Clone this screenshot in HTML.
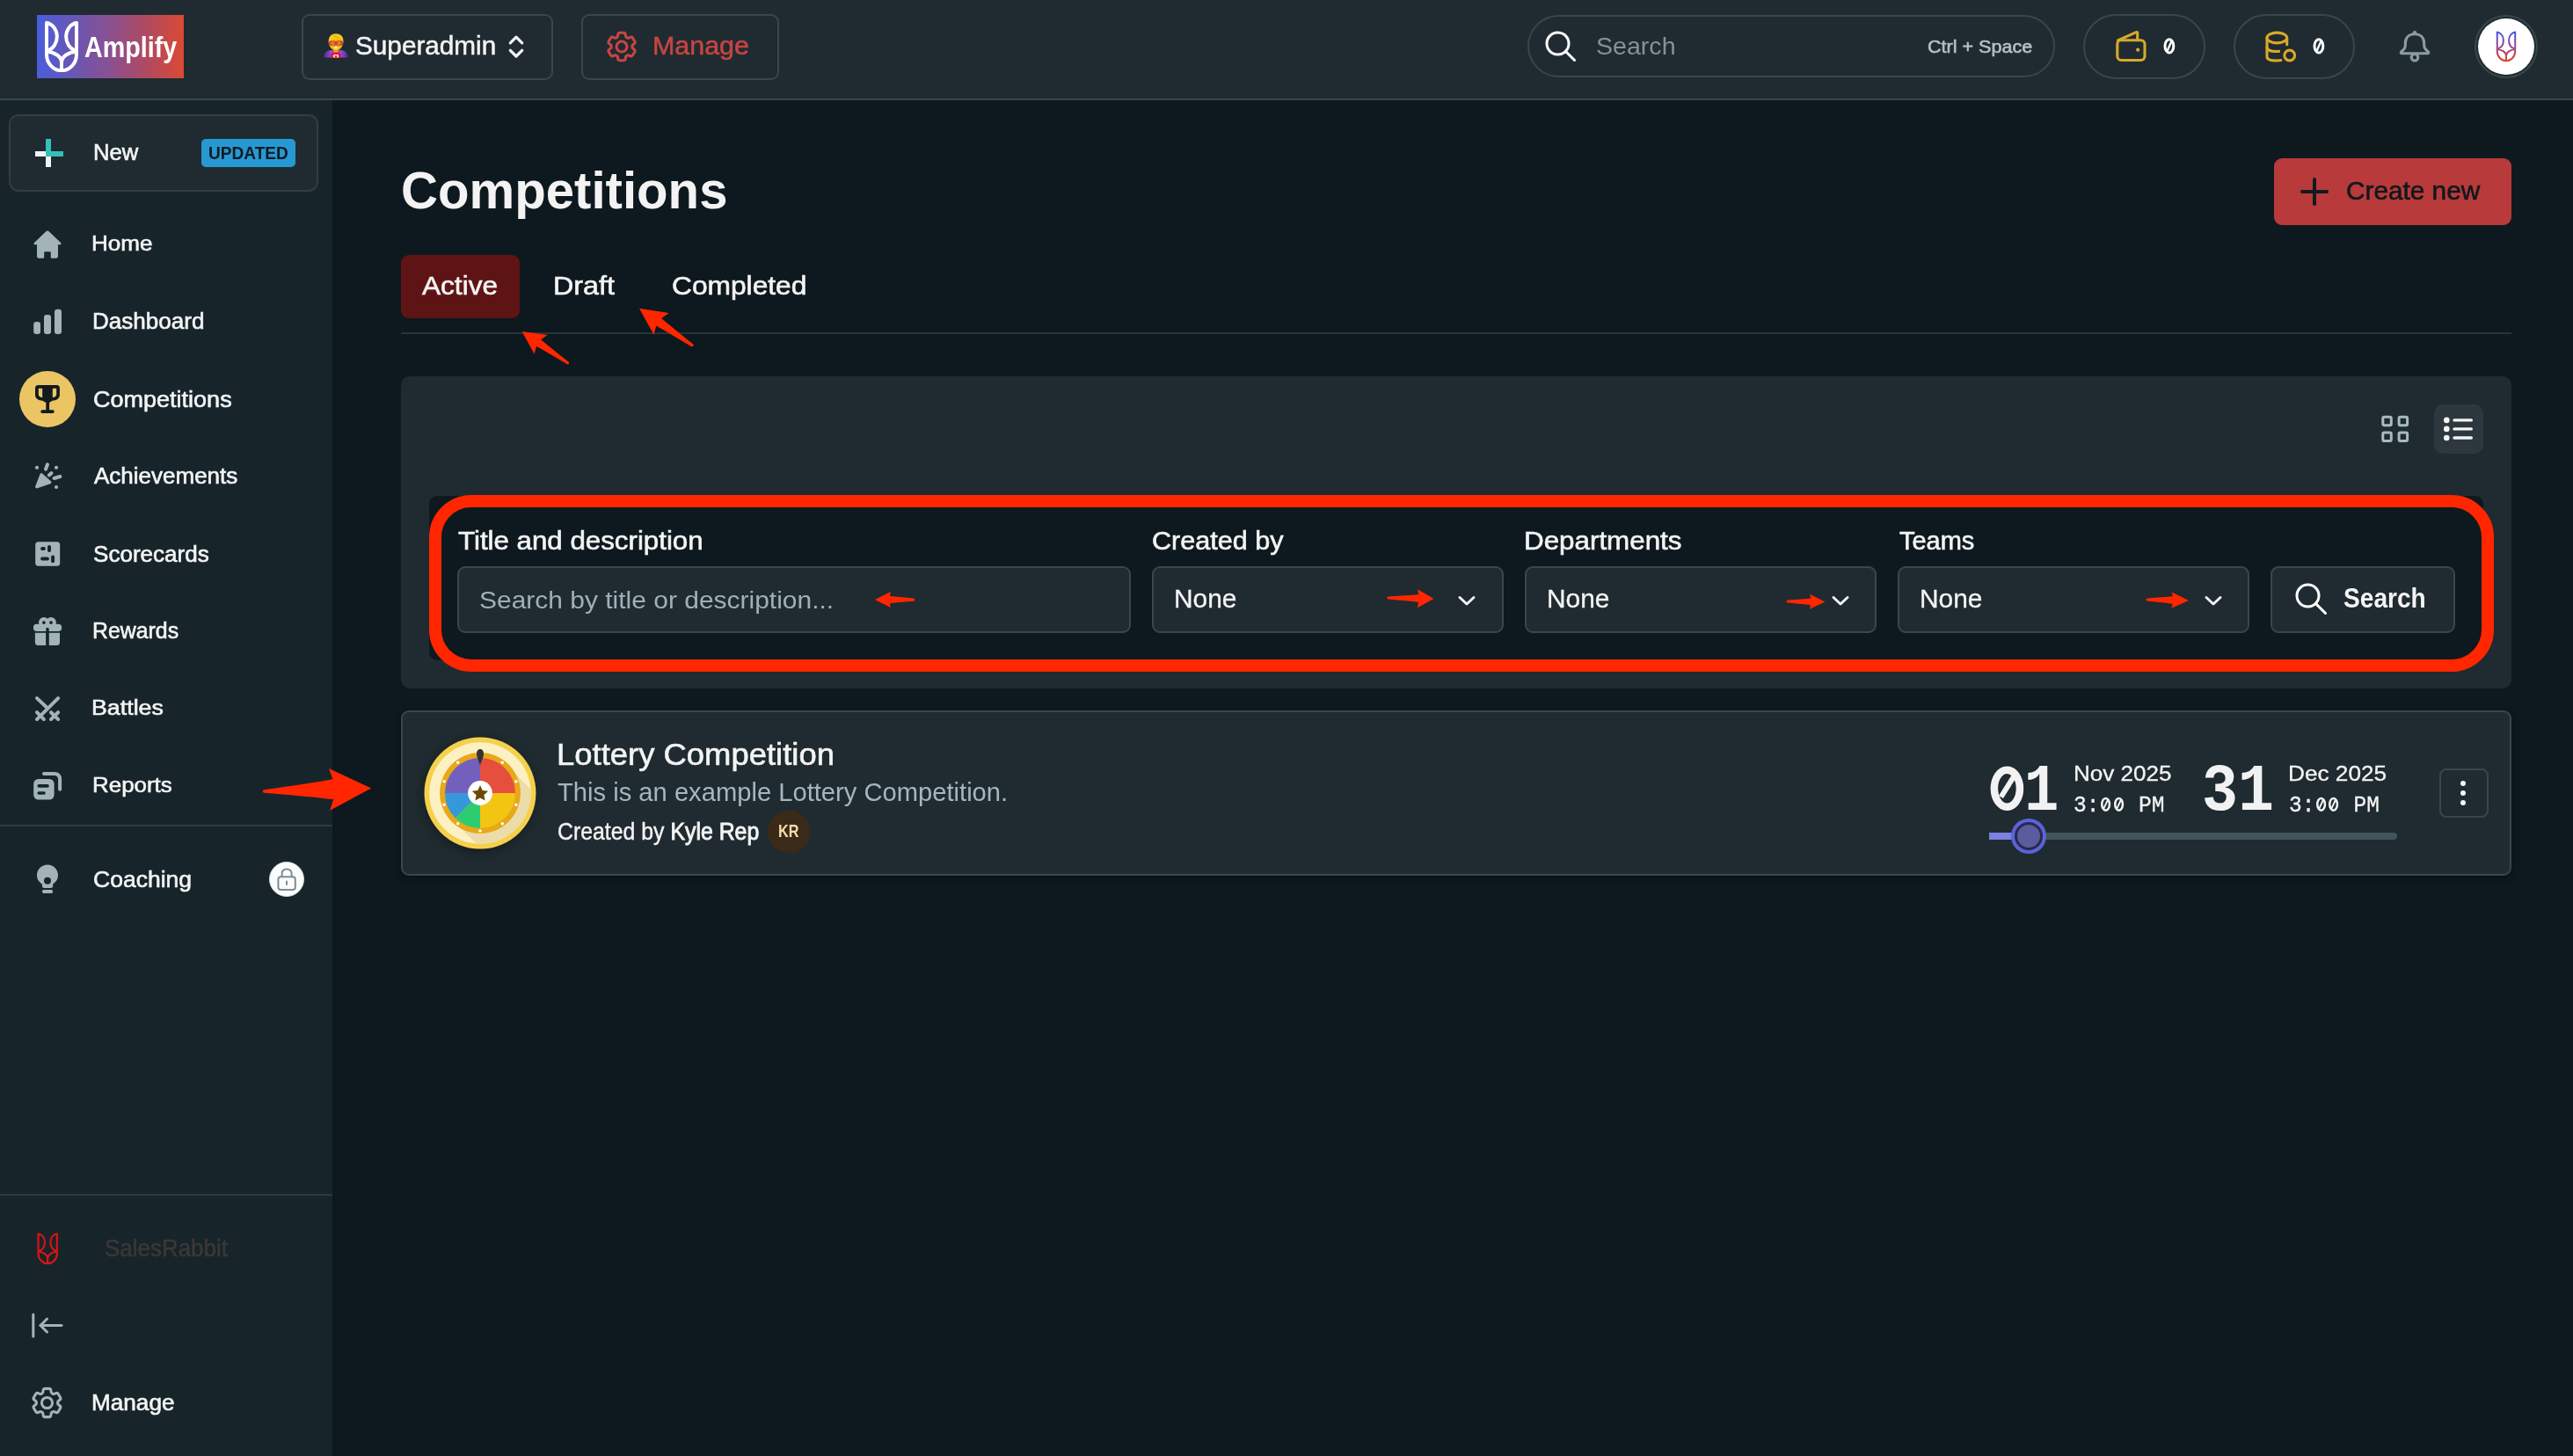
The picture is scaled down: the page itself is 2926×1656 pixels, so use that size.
<!DOCTYPE html>
<html><head><meta charset="utf-8"><style>
html,body{margin:0;padding:0;width:2926px;height:1656px;overflow:hidden;background:#0d191e;}
body>div,body>span,body>svg{position:absolute;box-sizing:border-box;}
.t{line-height:1;white-space:nowrap;transform-origin:0 0;}
</style></head><body>
<div style="left:0px;top:0px;width:2926px;height:112px;background:#1f2b30"></div>
<div style="left:0px;top:112px;width:2926px;height:2px;background:#3a4549"></div>
<div style="left:0px;top:114px;width:378px;height:1542px;background:#17252b"></div>
<div style="left:42px;top:17px;width:167px;height:72px;background:linear-gradient(90deg,#4a5edc 0%,#6a56b4 25%,#8a5090 50%,#b04a60 75%,#da4a33 100%)"></div>
<span class="t" style="left:96.32px;top:38.05px;font-family:'Liberation Sans',sans-serif;font-size:32.61px;font-weight:700;color:#fff;transform:scaleX(0.8797)">Amplify</span>
<div style="left:343px;top:16px;width:286px;height:75px;border:2px solid #3a464b;border-radius:9px;background:#1f2b30"></div>
<span class="t" style="left:403.52px;top:36.81px;font-family:'Liberation Sans',sans-serif;font-size:30.29px;font-weight:400;color:#f4f4f4;-webkit-text-stroke:0.5px #f4f4f4;transform:scaleX(0.9814)">Superadmin</span>
<div style="left:661px;top:16px;width:225px;height:75px;border:2px solid #3a464b;border-radius:9px;background:#1f2b30"></div>
<span class="t" style="left:742.45px;top:37.39px;font-family:'Liberation Sans',sans-serif;font-size:29.71px;font-weight:400;color:#c94444;-webkit-text-stroke:0.5px #c94444;transform:scaleX(1.0240)">Manage</span>
<div style="left:1737px;top:17px;width:600px;height:71px;border:2px solid #3a464b;border-radius:36px;background:#1f2b30"></div>
<span class="t" style="left:1814.99px;top:38.12px;font-family:'Liberation Sans',sans-serif;font-size:28.26px;font-weight:400;color:#8b8f91;transform:scaleX(1.0115)">Search</span>
<span class="t" style="left:2191.97px;top:41.74px;font-family:'Liberation Sans',sans-serif;font-size:21.01px;font-weight:400;color:#b4c2c6;-webkit-text-stroke:0.6px #b4c2c6;transform:scaleX(1.0261)">Ctrl + Space</span>
<div style="left:2369px;top:16px;width:139px;height:74px;border:2px solid #3a464b;border-radius:37px"></div>
<div style="left:2540px;top:16px;width:138px;height:74px;border:2px solid #3a464b;border-radius:37px"></div>
<div style="left:2814px;top:17px;width:72px;height:72px;border:2px solid #39464b;border-radius:50%"></div>
<div style="left:2818px;top:21px;width:64px;height:64px;background:#fff;border-radius:50%"></div>
<div style="left:10px;top:130px;width:352px;height:88px;border:2px solid #323d42;border-radius:11px;background:#1f2b30"></div>
<span class="t" style="left:105.98px;top:161.07px;font-family:'Liberation Sans',sans-serif;font-size:25.36px;font-weight:400;color:#f4f4f4;-webkit-text-stroke:0.6px #f4f4f4;transform:scaleX(1.0102)">New</span>
<div style="left:229px;top:158px;width:107px;height:32px;background:#2799d2;border-radius:5px"></div>
<span class="t" style="left:237.08px;top:163.80px;font-family:'Liberation Sans',sans-serif;font-size:20.65px;font-weight:700;color:#0e1a22;transform:scaleX(0.9245)">UPDATED</span>
<span class="t" style="left:104.48px;top:265.18px;font-family:'Liberation Sans',sans-serif;font-size:24.64px;font-weight:400;color:#f4f4f4;-webkit-text-stroke:0.6px #f4f4f4;transform:scaleX(1.0579)">Home</span>
<span class="t" style="left:104.54px;top:353.07px;font-family:'Liberation Sans',sans-serif;font-size:25.36px;font-weight:400;color:#f4f4f4;-webkit-text-stroke:0.6px #f4f4f4;transform:scaleX(1.0281)">Dashboard</span>
<span class="t" style="left:105.56px;top:440.76px;font-family:'Liberation Sans',sans-serif;font-size:26.09px;font-weight:400;color:#f4f4f4;-webkit-text-stroke:0.6px #f4f4f4;transform:scaleX(1.0358)">Competitions</span>
<span class="t" style="left:106.60px;top:529.07px;font-family:'Liberation Sans',sans-serif;font-size:25.36px;font-weight:400;color:#f4f4f4;-webkit-text-stroke:0.6px #f4f4f4;transform:scaleX(1.0252)">Achievements</span>
<span class="t" style="left:105.60px;top:616.56px;font-family:'Liberation Sans',sans-serif;font-size:26.09px;font-weight:400;color:#f4f4f4;-webkit-text-stroke:0.6px #f4f4f4;transform:scaleX(0.9992)">Scorecards</span>
<span class="t" style="left:104.67px;top:704.70px;font-family:'Liberation Sans',sans-serif;font-size:25.80px;font-weight:400;color:#f4f4f4;-webkit-text-stroke:0.6px #f4f4f4;transform:scaleX(0.9636)">Rewards</span>
<span class="t" style="left:104.42px;top:793.18px;font-family:'Liberation Sans',sans-serif;font-size:24.64px;font-weight:400;color:#f4f4f4;-webkit-text-stroke:0.6px #f4f4f4;transform:scaleX(1.0877)">Battles</span>
<span class="t" style="left:104.50px;top:881.18px;font-family:'Liberation Sans',sans-serif;font-size:24.64px;font-weight:400;color:#f4f4f4;-webkit-text-stroke:0.6px #f4f4f4;transform:scaleX(1.0524)">Reports</span>
<span class="t" style="left:105.58px;top:986.96px;font-family:'Liberation Sans',sans-serif;font-size:26.09px;font-weight:400;color:#f4f4f4;-webkit-text-stroke:0.6px #f4f4f4;transform:scaleX(1.0176)">Coaching</span>
<div style="left:22px;top:422px;width:64px;height:64px;background:#ebc564;border-radius:50%"></div>
<div style="left:0px;top:938px;width:378px;height:2px;background:#2f3a3f"></div>
<div style="left:306px;top:980px;width:40px;height:40px;background:#fbfcfc;border-radius:50%;border:1.5px solid #cfd8db"></div>
<div style="left:0px;top:1358px;width:378px;height:2px;background:#2f3a3f"></div>
<span class="t" style="left:118.84px;top:1406.82px;font-family:'Liberation Sans',sans-serif;font-size:26.96px;font-weight:400;color:#3c3836;-webkit-text-stroke:0.4px #3c3836;transform:scaleX(0.9625)">SalesRabbit</span>
<span class="t" style="left:104.33px;top:1583.09px;font-family:'Liberation Sans',sans-serif;font-size:25.22px;font-weight:400;color:#f4f4f4;-webkit-text-stroke:0.6px #f4f4f4;transform:scaleX(1.0364)">Manage</span>
<span class="t" style="left:455.57px;top:186.68px;font-family:'Liberation Sans',sans-serif;font-size:60.14px;font-weight:700;color:#f3f3f3;transform:scaleX(0.9671)">Competitions</span>
<div style="left:2586px;top:180px;width:270px;height:76px;background:#b93a3a;border-radius:9px"></div>
<span class="t" style="left:2667.97px;top:203.01px;font-family:'Liberation Sans',sans-serif;font-size:28.99px;font-weight:400;color:#10191e;-webkit-text-stroke:0.6px #10191e;transform:scaleX(1.0270)">Create new</span>
<div style="left:456px;top:290px;width:135px;height:72px;background:#5e1415;border-radius:9px"></div>
<span class="t" style="left:480.40px;top:310.35px;font-family:'Liberation Sans',sans-serif;font-size:30.00px;font-weight:400;color:#f4f4f4;-webkit-text-stroke:0.6px #f4f4f4;transform:scaleX(1.0531)">Active</span>
<span class="t" style="left:629.45px;top:310.35px;font-family:'Liberation Sans',sans-serif;font-size:30.00px;font-weight:400;color:#f4f4f4;-webkit-text-stroke:0.6px #f4f4f4;transform:scaleX(1.0746)">Draft</span>
<span class="t" style="left:764.34px;top:310.35px;font-family:'Liberation Sans',sans-serif;font-size:30.00px;font-weight:400;color:#f4f4f4;-webkit-text-stroke:0.6px #f4f4f4;transform:scaleX(1.0573)">Completed</span>
<div style="left:456px;top:378px;width:2400px;height:2px;background:#29343a"></div>
<div style="left:456px;top:428px;width:2400px;height:355px;background:#1f2b30;border-radius:10px"></div>
<div style="left:2768px;top:460px;width:56px;height:56px;background:#2c383d;border-radius:10px"></div>
<div style="left:488px;top:564px;width:2336px;height:187px;background:#0d191e;border-radius:9px"></div>
<span class="t" style="left:520.50px;top:600.44px;font-family:'Liberation Sans',sans-serif;font-size:29.42px;font-weight:400;color:#f4f4f4;-webkit-text-stroke:0.6px #f4f4f4;transform:scaleX(1.0632)">Title and description</span>
<span class="t" style="left:1309.96px;top:600.44px;font-family:'Liberation Sans',sans-serif;font-size:29.42px;font-weight:400;color:#f4f4f4;-webkit-text-stroke:0.6px #f4f4f4;transform:scaleX(1.0402)">Created by</span>
<span class="t" style="left:1732.87px;top:600.44px;font-family:'Liberation Sans',sans-serif;font-size:29.42px;font-weight:400;color:#f4f4f4;-webkit-text-stroke:0.6px #f4f4f4;transform:scaleX(1.0663)">Departments</span>
<span class="t" style="left:2159.50px;top:600.44px;font-family:'Liberation Sans',sans-serif;font-size:29.42px;font-weight:400;color:#f4f4f4;-webkit-text-stroke:0.6px #f4f4f4;transform:scaleX(0.9855)">Teams</span>
<div style="left:520px;top:644px;width:766px;height:76px;border:2px solid #3a464b;border-radius:9px;background:#1f2b30"></div>
<div style="left:1310px;top:644px;width:400px;height:76px;border:2px solid #3a464b;border-radius:9px;background:#1f2b30"></div>
<div style="left:1734px;top:644px;width:400px;height:76px;border:2px solid #3a464b;border-radius:9px;background:#1f2b30"></div>
<div style="left:2158px;top:644px;width:400px;height:76px;border:2px solid #3a464b;border-radius:9px;background:#1f2b30"></div>
<div style="left:2582px;top:644px;width:210px;height:76px;border:2px solid #3a464b;border-radius:9px;background:#1f2b30"></div>
<span class="t" style="left:544.94px;top:668.12px;font-family:'Liberation Sans',sans-serif;font-size:28.26px;font-weight:400;color:#9fb1b6;transform:scaleX(1.0610)">Search by title or description...</span>
<span class="t" style="left:1334.94px;top:666.51px;font-family:'Liberation Sans',sans-serif;font-size:28.99px;font-weight:400;color:#f4f4f4;-webkit-text-stroke:0.3px #f4f4f4;transform:scaleX(1.0303)">None</span>
<span class="t" style="left:1758.94px;top:666.51px;font-family:'Liberation Sans',sans-serif;font-size:28.99px;font-weight:400;color:#f4f4f4;-webkit-text-stroke:0.3px #f4f4f4;transform:scaleX(1.0303)">None</span>
<span class="t" style="left:2182.94px;top:666.51px;font-family:'Liberation Sans',sans-serif;font-size:28.99px;font-weight:400;color:#f4f4f4;-webkit-text-stroke:0.3px #f4f4f4;transform:scaleX(1.0303)">None</span>
<span class="t" style="left:2664.58px;top:665.28px;font-family:'Liberation Sans',sans-serif;font-size:30.43px;font-weight:700;color:#f4f4f4;transform:scaleX(0.9242)">Search</span>
<div style="left:456px;top:808px;width:2400px;height:188px;border:2px solid #3a464b;border-radius:9px;background:#1f2b30;box-shadow:0 3px 8px rgba(0,0,0,0.35)"></div>
<span class="t" style="left:632.87px;top:840.70px;font-family:'Liberation Sans',sans-serif;font-size:34.20px;font-weight:400;color:#f4f4f4;-webkit-text-stroke:0.6px #f4f4f4;transform:scaleX(1.0659)">Lottery Competition</span>
<span class="t" style="left:634.01px;top:886.02px;font-family:'Liberation Sans',sans-serif;font-size:29.57px;font-weight:400;color:#a3b8be;transform:scaleX(0.9864)">This is an example Lottery Competition.</span>
<span class="t" style="left:634.10px;top:931.73px;font-family:'Liberation Sans',sans-serif;font-size:27.54px;font-weight:400;color:#f4f4f4;-webkit-text-stroke:0.4px #f4f4f4;transform:scaleX(0.9022)">Created by <span style="-webkit-text-stroke:0.9px #f4f4f4">Kyle Rep</span></span>
<div style="left:873px;top:922px;width:48px;height:48px;background:#3b2a17;border-radius:50%"></div>
<span class="t" style="left:884.69px;top:935.66px;font-family:'Liberation Sans',sans-serif;font-size:19.93px;font-weight:700;color:#f5dcae;transform:scaleX(0.8148)">KR</span>
<span class="t" style="left:2302.42px;top:863.47px;font-family:'Liberation Mono',monospace;font-size:76.52px;font-weight:700;color:#f2f2f2;transform:scaleX(0.8553)">1</span>
<svg style="left:2259px;top:867px;" width="48" height="60" viewBox="0 0 48 60"><ellipse cx="23.4" cy="29.75" rx="14.55" ry="21" fill="none" stroke="#f2f2f2" stroke-width="8.5"/><path d="M16.5,39.5 L31.5,15.5" stroke="#f2f2f2" stroke-width="6"/></svg>
<span class="t" style="left:2357.88px;top:868.18px;font-family:'Liberation Sans',sans-serif;font-size:24.64px;font-weight:400;color:#f4f4f4;-webkit-text-stroke:0.3px #f4f4f4;transform:scaleX(1.0583)">Nov 2025</span>
<span class="t" style="left:2358.13px;top:903.23px;font-family:'Liberation Mono',monospace;font-size:26.36px;font-weight:400;color:#f4f4f4;-webkit-text-stroke:0.3px #f4f4f4;transform:scaleX(0.9346)">3:&nbsp;&nbsp; PM</span>
<span class="t" style="left:2504.37px;top:864.11px;font-family:'Liberation Mono',monospace;font-size:75.15px;font-weight:700;color:#f2f2f2;transform:scaleX(0.9084)">31</span>
<span class="t" style="left:2602.37px;top:868.18px;font-family:'Liberation Sans',sans-serif;font-size:24.64px;font-weight:400;color:#f4f4f4;-webkit-text-stroke:0.3px #f4f4f4;transform:scaleX(1.0631)">Dec 2025</span>
<span class="t" style="left:2602.64px;top:903.23px;font-family:'Liberation Mono',monospace;font-size:26.36px;font-weight:400;color:#f4f4f4;-webkit-text-stroke:0.3px #f4f4f4;transform:scaleX(0.9299)">3:&nbsp;&nbsp; PM</span>
<div style="left:2774px;top:874px;width:56px;height:56px;border:2px solid #3a464b;border-radius:8px"></div>
<div style="left:2262px;top:947px;width:464px;height:8px;background:#43545a;border-radius:4px"></div>
<div style="left:2262px;top:947px;width:38px;height:8px;background:#7c80e2"></div>
<div style="left:2287px;top:931px;width:40px;height:40px;background:#5c63d8;border-radius:50%"></div>
<div style="left:2291px;top:935px;width:32px;height:32px;background:#262a4c;border-radius:50%"></div>
<div style="left:2294px;top:938px;width:26px;height:26px;background:#5a5c9e;border-radius:50%"></div>
<svg style="left:2388.2px;top:905px;" width="13.2" height="19.6" viewBox="0 0 13.2 19.6"><ellipse cx="6.6" cy="9.8" rx="4.35" ry="6.9" fill="none" stroke="#f4f4f4" stroke-width="2.5"/><path d="M4.4,14.6 L8.8,5" stroke="#f4f4f4" stroke-width="1.9"/></svg>
<svg style="left:2402.8px;top:905px;" width="13.2" height="19.6" viewBox="0 0 13.2 19.6"><ellipse cx="6.6" cy="9.8" rx="4.35" ry="6.9" fill="none" stroke="#f4f4f4" stroke-width="2.5"/><path d="M4.4,14.6 L8.8,5" stroke="#f4f4f4" stroke-width="1.9"/></svg>
<svg style="left:2632.7px;top:905px;" width="13.2" height="19.6" viewBox="0 0 13.2 19.6"><ellipse cx="6.6" cy="9.8" rx="4.35" ry="6.9" fill="none" stroke="#f4f4f4" stroke-width="2.5"/><path d="M4.4,14.6 L8.8,5" stroke="#f4f4f4" stroke-width="1.9"/></svg>
<svg style="left:2647.3px;top:905px;" width="13.2" height="19.6" viewBox="0 0 13.2 19.6"><ellipse cx="6.6" cy="9.8" rx="4.35" ry="6.9" fill="none" stroke="#f4f4f4" stroke-width="2.5"/><path d="M4.4,14.6 L8.8,5" stroke="#f4f4f4" stroke-width="1.9"/></svg>
<svg style="left:50.6px;top:24px;" width="38" height="58.3" viewBox="0 0 38 58.3"><path d="M2,2 V38 A17,18.3 0 0 0 36,38 V2 M2,2 C17,5 18.5,29 2,34 M36,2 C21,5 19.5,29 36,34 M2,34.5 C11,35.5 19,40 19,47 V56 M36,34.5 C27,35.5 19,40 19,47" fill="none" stroke="#fff" stroke-width="4" stroke-linecap="round" stroke-linejoin="round"/></svg>
<svg style="left:367px;top:37px;" width="30" height="29" viewBox="0 0 30 29"><defs><linearGradient id="capeg" x1="0" y1="0" x2="1" y2="0"><stop offset="0" stop-color="#4a2a8a"/><stop offset="0.3" stop-color="#8a50d0"/><stop offset="0.7" stop-color="#8a50d0"/><stop offset="1" stop-color="#4a2a8a"/></linearGradient></defs>
<path d="M1,28.5 C2,22 5,20 10,20 L20,20 C25,20 28,22 29,28.5 Z" fill="url(#capeg)"/>
<path d="M8.5,28.5 C9,24 11,22.5 13,22.5 L17,22.5 C19,22.5 21,24 21.5,28.5 Z" fill="#e3173c"/>
<rect x="12" y="25.3" width="6" height="3.2" rx="1" fill="#fff"/><rect x="13.5" y="26.3" width="3" height="2.2" fill="#e3173c"/>
<rect x="12.5" y="17" width="5" height="5.5" fill="#e9a000"/>
<ellipse cx="15" cy="12.2" rx="7.8" ry="8.3" fill="#f5be12"/>
<path d="M6.8,13 C5.8,4.5 9.8,1.2 15,1.2 C20.5,1.2 24.5,4.5 23.3,13 C22.6,8.8 21,6.8 17.5,5.8 C15,7.5 10.5,8 6.8,13Z" fill="#f7c81e"/>
<path d="M12,3.5 C14,4.8 16.5,5.2 18.5,6" fill="none" stroke="#d9a000" stroke-width="0.8"/>
<path d="M7,12 C7,9.6 8.5,9.3 11.3,9.3 C13,9.3 14,10 15,10 C16,10 17,9.3 18.7,9.3 C21.5,9.3 23,9.6 23,12 C23,14.6 21,15 18.7,15 C17,15 16,14.2 15,14.2 C14,14.2 13,15 11.3,15 C9,15 7,14.6 7,12Z" fill="#e8353a"/>
<circle cx="11.4" cy="12.1" r="1.9" fill="#f5be12"/><circle cx="18.6" cy="12.1" r="1.9" fill="#f5be12"/>
<circle cx="11.4" cy="12.1" r="1.1" fill="#5a8a20"/><circle cx="18.6" cy="12.1" r="1.1" fill="#5a8a20"/>
<ellipse cx="15" cy="17.3" rx="1.9" ry="0.9" fill="#fff"/>
</svg>
<svg style="left:575px;top:38px;" width="24" height="30" viewBox="0 0 24 30"><path d="M5.3,10.9 L12,4.2 L18.7,10.9 M5.3,19.3 L12,26 L18.7,19.3" fill="none" stroke="#f4f4f4" stroke-width="3.2" stroke-linecap="round" stroke-linejoin="round"/></svg>
<svg style="left:686.4px;top:32.1px;" width="42" height="42" viewBox="0 0 24 24"><path d="M9.594 3.94c.09-.542.56-.94 1.11-.94h2.593c.55 0 1.02.398 1.11.94l.213 1.281c.063.374.313.686.645.87.074.04.147.083.22.127.325.196.72.257 1.075.124l1.217-.456a1.125 1.125 0 0 1 1.37.49l1.296 2.247a1.125 1.125 0 0 1-.26 1.431l-1.003.827c-.293.241-.438.613-.43.992a7.723 7.723 0 0 1 0 .255c-.008.378.137.75.43.991l1.004.827c.424.35.534.955.26 1.43l-1.298 2.247a1.125 1.125 0 0 1-1.369.491l-1.217-.456c-.355-.133-.75-.072-1.076.124a6.47 6.47 0 0 1-.22.128c-.331.183-.581.495-.644.869l-.213 1.281c-.09.543-.56.94-1.11.94h-2.594c-.55 0-1.019-.398-1.11-.94l-.213-1.281c-.062-.374-.312-.686-.644-.87a6.52 6.52 0 0 1-.22-.127c-.325-.196-.72-.257-1.076-.124l-1.217.456a1.125 1.125 0 0 1-1.369-.49l-1.297-2.247a1.125 1.125 0 0 1 .26-1.431l1.004-.827c.292-.24.437-.613.43-.991a6.932 6.932 0 0 1 0-.255c.007-.38-.138-.751-.43-.992l-1.004-.827a1.125 1.125 0 0 1-.26-1.43l1.297-2.247a1.125 1.125 0 0 1 1.37-.491l1.216.456c.356.133.751.072 1.076-.124.072-.044.146-.086.22-.128.332-.183.582-.495.644-.869l.214-1.28ZM15.4 12a3.4 3.4 0 1 1-6.8 0 3.4 3.4 0 0 1 6.8 0Z" fill="none" stroke="#c94444" stroke-width="1.75"/></svg>
<svg style="left:1756px;top:34px;" width="38" height="38" viewBox="0 0 38 38"><circle cx="15.5" cy="15.5" r="12.5" fill="none" stroke="#fff" stroke-width="3"/><path d="M24.5,24.5 L34.5,34.5" stroke="#fff" stroke-width="3" stroke-linecap="round"/></svg>
<svg style="left:2403px;top:33px;" width="41" height="41" viewBox="0 0 41 41"><rect x="4.8" y="12.8" width="31.2" height="22.7" rx="4.5" fill="none" stroke="#d9a82a" stroke-width="3.1"/><path d="M5.5,13 L26.3,3.6 Q27.7,3 27.7,4.6 L27.7,12.8" fill="none" stroke="#d9a82a" stroke-width="3.1" stroke-linejoin="round" stroke-linecap="round"/><circle cx="28.2" cy="23.7" r="2.1" fill="#d9a82a"/></svg>
<svg style="left:2574px;top:33px;" width="42" height="42" viewBox="0 0 42 42"><g fill="none" stroke="#d9a82a" stroke-width="3.1" stroke-linecap="round">
<ellipse cx="15.35" cy="10" rx="11.35" ry="5.9"/>
<path d="M4,10 V31.5 C4,34.5 9,36 15.3,36 C16.8,36 18.3,35.9 19.8,35.6"/>
<path d="M4,20.5 C4,23.8 9,25.5 15.3,25.5 C16,25.5 16.8,25.5 17.6,25.4"/>
<path d="M26.7,10 V17.8"/>
<circle cx="29.7" cy="30" r="5.9"/>
</g></svg>
<svg style="left:2459.8px;top:43px;" width="14" height="19" viewBox="0 0 14 19"><ellipse cx="6.9" cy="9.4" rx="4.9" ry="7.6" fill="none" stroke="#fff" stroke-width="3"/><path d="M9.3,4.3 L4.7,14.7" stroke="#fff" stroke-width="2.4"/></svg>
<svg style="left:2630px;top:43px;" width="14" height="19" viewBox="0 0 14 19"><ellipse cx="6.9" cy="9.4" rx="4.9" ry="7.6" fill="none" stroke="#fff" stroke-width="3"/><path d="M9.3,4.3 L4.7,14.7" stroke="#fff" stroke-width="2.4"/></svg>
<svg style="left:2727px;top:33px;" width="38" height="40" viewBox="0 0 38 40"><g fill="none" stroke="#8b9ca1" stroke-width="3.1" stroke-linejoin="round">
<path d="M19,5.8 C12,5.8 8.3,10.5 8.3,16.5 V19 C8.3,21.5 6.8,23.3 3.8,25.7 C2.8,26.6 3.2,27.8 4.7,27.8 H33.3 C34.8,27.8 35.2,26.6 34.2,25.7 C31.2,23.3 29.7,21.5 29.7,19 V16.5 C29.7,10.5 26,5.8 19,5.8 Z"/>
<circle cx="19" cy="32.2" r="3.8"/>
</g><circle cx="19" cy="4.3" r="2.3" fill="#8b9ca1"/></svg>
<svg style="left:2838px;top:35px;" width="24" height="35.5" viewBox="0 0 23.4 35.4"><defs><linearGradient id="lg1" x1="0" y1="0" x2="0" y2="1"><stop offset="0" stop-color="#4a55e6"/><stop offset="1" stop-color="#e4432e"/></linearGradient></defs><path d="M2,2 V38 A17,18.3 0 0 0 36,38 V2 M2,2 C17,5 18.5,29 2,34 M36,2 C21,5 19.5,29 36,34 M2,34.5 C11,35.5 19,40 19,47 V56 M36,34.5 C27,35.5 19,40 19,47" fill="none" stroke="url(#lg1)" stroke-width="3.4" stroke-linecap="round" stroke-linejoin="round" transform="translate(0.3,0.3) scale(0.6)"/></svg>
<div style="left:52px;top:158px;width:6px;height:20px;background:#33c1b9"></div>
<div style="left:52px;top:172px;width:20px;height:6px;background:#33c1b9"></div>
<div style="left:40px;top:172px;width:12px;height:6px;background:#f2f4f4"></div>
<div style="left:52px;top:178px;width:6px;height:12px;background:#f2f4f4"></div>
<svg style="left:36px;top:260px;" width="36" height="36" viewBox="0 0 36 36"><path d="M18,2.5 Q17,2.5 16,3.5 L3,16 Q1.8,17.4 3,18.2 L6,18.2 V31.5 Q6,33.8 8.3,33.8 H13.2 Q14.2,33.8 14.2,32.8 V27 Q14.2,26.2 15.5,26.2 H20.5 Q21.8,26.2 21.8,27 V32.8 Q21.8,33.8 22.8,33.8 H27.7 Q30,33.8 30,31.5 V18.2 H33 Q34.2,17.4 33,16 L20,3.5 Q19,2.5 18,2.5Z" fill="#a3b4b9"/></svg>
<svg style="left:36px;top:349px;" width="36" height="33" viewBox="0 0 36 33"><rect x="2.2" y="17" width="7.8" height="14" rx="3" fill="#a3b4b9"/><rect x="14" y="9" width="8" height="22" rx="3" fill="#a3b4b9"/><rect x="26" y="2.8" width="8" height="28.2" rx="3" fill="#a3b4b9"/></svg>
<svg style="left:38px;top:436px;" width="32" height="36" viewBox="0 0 32 36"><path d="M2,5.5 Q2,2 5.5,2 H26.4 Q29.9,2 29.9,5.5 V13 C29.9,17.5 26,19.5 21.5,19.8 C20,20.8 18.8,21.5 18.1,22 V30.2 H21.9 A1.85,1.85 0 0 1 21.9,33.9 H10.1 A1.85,1.85 0 0 1 10.1,30.2 H14.3 V22 C13.2,21.5 12,20.8 10.5,19.8 C6,19.5 2,17.5 2,13 Z" fill="#101a1f"/>
<path d="M5.8,5.8 H10.2 V16.3 C7.5,16 5.8,14.5 5.8,12.5 Z" fill="#ebc564"/>
<path d="M26.2,5.8 H21.8 V16.3 C24.5,16 26.2,14.5 26.2,12.5 Z" fill="#ebc564"/></svg>
<svg style="left:36px;top:522px;" width="36" height="36" viewBox="0 0 36 36"><path d="M11.2,18 L5.9,31.6 L20.6,26.6 Z" fill="#a3b4b9" stroke="#a3b4b9" stroke-width="3.6" stroke-linejoin="round"/>
<g stroke="#a3b4b9" stroke-width="4" stroke-linecap="round">
<path d="M18,6.3 L16,11.6"/><path d="M22.5,16 L19.8,18.4"/><path d="M32.4,20 L25.5,22"/>
</g>
<circle cx="6" cy="9.8" r="2.1" fill="#a3b4b9"/><circle cx="28" cy="9.8" r="2.1" fill="#a3b4b9"/><circle cx="28" cy="32" r="2.1" fill="#a3b4b9"/></svg>
<svg style="left:36px;top:612px;" width="36" height="36" viewBox="0 0 36 36"><rect x="4.2" y="4.2" width="28" height="27.6" rx="3.5" fill="#a3b4b9"/>
<g stroke="#17252b" stroke-width="4" stroke-linecap="round">
<path d="M12.1,11.9 H13.9"/><path d="M20,10 V14"/><path d="M12.1,23.6 H17.9"/><path d="M24.1,21.6 V26.2"/>
</g></svg>
<svg style="left:36px;top:698px;" width="36" height="38" viewBox="0 0 36 38"><g fill="#a3b4b9">
<circle cx="13.9" cy="9.8" r="5.9"/><circle cx="22" cy="9.8" r="5.9"/>
<rect x="1.9" y="11.8" width="32.3" height="8.2" rx="4.1"/>
<path d="M3.9,21.7 H16.1 V35.9 H7.4 Q3.9,35.9 3.9,32.4 Z"/>
<path d="M19.8,21.7 H32 V32.4 Q32,35.9 28.5,35.9 H19.8 Z"/>
</g>
<circle cx="13.9" cy="10.1" r="1.9" fill="#17252b"/><circle cx="22" cy="10.1" r="1.9" fill="#17252b"/>
<path d="M16.3,20.5 V17.4 A1.7,1.7 0 0 1 19.7,17.4 V20.5 Z" fill="#17252b"/></svg>
<svg style="left:36px;top:790px;" width="36" height="34" viewBox="0 0 36 34"><g stroke="#a3b4b9" stroke-width="4" stroke-linecap="round" fill="none">
<path d="M6,4.1 L16.8,14.2"/><path d="M30.1,4.1 L6,28.1"/>
<path d="M6,20.2 L13.9,28.1"/>
<path d="M22,20.2 L30.1,28.1"/><path d="M30.1,20.2 L22,28.1"/>
</g></svg>
<svg style="left:36px;top:876px;" width="36" height="36" viewBox="0 0 36 36"><path d="M14,4 H25.6 Q32.1,4 32.1,10.5 V21.8" fill="none" stroke="#a3b4b9" stroke-width="4" stroke-linecap="round"/>
<rect x="2.2" y="10" width="23.4" height="23.5" rx="5.5" fill="#a3b4b9"/>
<g stroke="#17252b" stroke-width="3.6" stroke-linecap="round"><path d="M8.2,17.9 H18"/><path d="M8.2,26 H14"/></g></svg>
<svg style="left:36px;top:980px;" width="36" height="40" viewBox="0 0 36 40"><path d="M18,3.5 C24.7,3.5 30,8.8 30,15.5 C30,19.5 28.3,22.5 24.2,25.6 V27.5 Q24.2,30 21.7,30 H14.3 Q11.9,30 11.9,27.5 V25.6 C7.7,22.5 6,19.5 6,15.5 C6,8.8 11.3,3.5 18,3.5Z" fill="#a3b4b9"/>
<circle cx="18" cy="21.7" r="4" fill="#17252b"/>
<rect x="11.9" y="32" width="12.3" height="4" rx="2" fill="#a3b4b9"/></svg>
<svg style="left:312px;top:985px;" width="28" height="30" viewBox="0 0 28 30"><g fill="none" stroke="#7b8e94" stroke-width="2" stroke-linejoin="round">
<rect x="4.4" y="12.2" width="19.4" height="14.8" rx="3"/>
<path d="M8.6,12 V9 C8.6,5.3 11,3.5 14,3.5 C17,3.5 19.7,5.3 19.7,9 V12"/>
<path d="M14,17.5 V21" stroke-linecap="round"/></g></svg>
<svg style="left:41.6px;top:1401.5px;" width="24.4" height="36.5" viewBox="0 0 23.6 36.2"><path d="M2,2 V38 A17,18.3 0 0 0 36,38 V2 M2,2 C17,5 18.5,29 2,34 M36,2 C21,5 19.5,29 36,34 M2,34.5 C11,35.5 19,40 19,47 V56 M36,34.5 C27,35.5 19,40 19,47" fill="none" stroke="#e01212" stroke-width="3.4" stroke-linecap="round" stroke-linejoin="round" transform="scale(0.62)"/></svg>
<svg style="left:34px;top:1492px;" width="40" height="32" viewBox="0 0 40 32"><g stroke="#a3b4b9" stroke-width="3" stroke-linecap="round" fill="none" stroke-linejoin="round"><path d="M3.8,3 V28"/><path d="M12,15.5 H36"/><path d="M19.5,8 L12,15.5 L19.5,23"/></g></svg>
<svg style="left:32.2px;top:1574.2px;" width="43" height="43" viewBox="0 0 24 24"><path d="M9.594 3.94c.09-.542.56-.94 1.11-.94h2.593c.55 0 1.02.398 1.11.94l.213 1.281c.063.374.313.686.645.87.074.04.147.083.22.127.325.196.72.257 1.075.124l1.217-.456a1.125 1.125 0 0 1 1.37.49l1.296 2.247a1.125 1.125 0 0 1-.26 1.431l-1.003.827c-.293.241-.438.613-.43.992a7.723 7.723 0 0 1 0 .255c-.008.378.137.75.43.991l1.004.827c.424.35.534.955.26 1.43l-1.298 2.247a1.125 1.125 0 0 1-1.369.491l-1.217-.456c-.355-.133-.75-.072-1.076.124a6.47 6.47 0 0 1-.22.128c-.331.183-.581.495-.644.869l-.213 1.281c-.09.543-.56.94-1.11.94h-2.594c-.55 0-1.019-.398-1.11-.94l-.213-1.281c-.062-.374-.312-.686-.644-.87a6.52 6.52 0 0 1-.22-.127c-.325-.196-.72-.257-1.076-.124l-1.217.456a1.125 1.125 0 0 1-1.369-.49l-1.297-2.247a1.125 1.125 0 0 1 .26-1.431l1.004-.827c.292-.24.437-.613.43-.991a6.932 6.932 0 0 1 0-.255c.007-.38-.138-.751-.43-.992l-1.004-.827a1.125 1.125 0 0 1-.26-1.43l1.297-2.247a1.125 1.125 0 0 1 1.37-.491l1.216.456c.356.133.751.072 1.076-.124.072-.044.146-.086.22-.128.332-.183.582-.495.644-.869l.214-1.28ZM15.4 12a3.4 3.4 0 1 1-6.8 0 3.4 3.4 0 0 1 6.8 0Z" fill="none" stroke="#a3b4b9" stroke-width="1.7"/></svg>
<svg style="left:2612px;top:198px;" width="40" height="40" viewBox="0 0 40 40"><path d="M20,6 V34 M6,20 H34" stroke="#121b20" stroke-width="4" stroke-linecap="round"/></svg>
<svg style="left:2706px;top:470px;" width="36" height="36" viewBox="0 0 36 36"><g fill="none" stroke="#a7bbc0" stroke-width="3"><rect x="3.8" y="4.2" width="9.5" height="9.5" rx="1.5"/><rect x="22.1" y="4.2" width="9.5" height="9.5" rx="1.5"/><rect x="3.8" y="22.1" width="9.5" height="9.5" rx="1.5"/><rect x="22.1" y="22.1" width="9.5" height="9.5" rx="1.5"/></g></svg>
<svg style="left:2776px;top:472px;" width="40" height="32" viewBox="0 0 40 32"><g fill="#f4f4f4"><circle cx="6.3" cy="5.9" r="3.3"/><circle cx="6.3" cy="15.9" r="3.3"/><circle cx="6.3" cy="26" r="3.3"/></g><g stroke="#f4f4f4" stroke-width="3.4" stroke-linecap="round"><path d="M15,5.9 H34.3"/><path d="M15,15.9 H34.3"/><path d="M15,26 H34.3"/></g></svg>
<svg style="left:1656.3px;top:671px;" width="24" height="24" viewBox="0 0 24 24"><path d="M4,8.5 L12,16 L20,8.5" fill="none" stroke="#f4f4f4" stroke-width="3" stroke-linecap="round" stroke-linejoin="round"/></svg>
<svg style="left:2080.5px;top:671px;" width="24" height="24" viewBox="0 0 24 24"><path d="M4,8.5 L12,16 L20,8.5" fill="none" stroke="#f4f4f4" stroke-width="3" stroke-linecap="round" stroke-linejoin="round"/></svg>
<svg style="left:2504.5px;top:671px;" width="24" height="24" viewBox="0 0 24 24"><path d="M4,8.5 L12,16 L20,8.5" fill="none" stroke="#f4f4f4" stroke-width="3" stroke-linecap="round" stroke-linejoin="round"/></svg>
<svg style="left:2609px;top:662px;" width="40" height="40" viewBox="0 0 40 40"><circle cx="15.5" cy="15.5" r="12.5" fill="none" stroke="#fff" stroke-width="3"/><path d="M24.5,24.5 L35.5,35.5" stroke="#fff" stroke-width="3" stroke-linecap="round"/></svg>
<div style="left:2798.4px;top:888px;width:6.0px;height:6px;background:#f4f4f4;border-radius:50%"></div>
<div style="left:2798.4px;top:898.7px;width:6.0px;height:6.0px;background:#f4f4f4;border-radius:50%"></div>
<div style="left:2798.4px;top:910px;width:6.0px;height:6px;background:#f4f4f4;border-radius:50%"></div>
<svg style="left:482px;top:838px;filter:drop-shadow(-1px 3px 6px rgba(0,0,0,0.35))" width="128" height="128" viewBox="0 0 128 128"><defs><clipPath id="wc"><circle cx="64" cy="64" r="57.7"/></clipPath></defs>
<circle cx="64" cy="64" r="63.5" fill="#f5d04c"/>
<circle cx="64" cy="64" r="57.7" fill="#fdf1c4"/>
<path d="M95,33 L140,78 L78,140 L33,95 Z" fill="#ecdcaa" clip-path="url(#wc)"/>
<circle cx="64" cy="64" r="45.9" fill="#e8a818"/>
<path d="M64,64 L64.00,24.00 A40,40 0 0 1 104.00,64.00 Z" fill="#e64e3e"/><path d="M64,64 L104.00,64.00 A40,40 0 0 1 64.00,104.00 Z" fill="#f2c512"/><path d="M64,64 L64.00,104.00 A40,40 0 0 1 35.72,92.28 Z" fill="#2ecc71"/><path d="M64,64 L35.72,92.28 A40,40 0 0 1 24.00,64.00 Z" fill="#3498db"/><path d="M64,64 L24.00,64.00 A40,40 0 0 1 64.00,24.00 Z" fill="#7360bd"/>
<circle cx="64" cy="64" r="13.9" fill="#fff"/>
<polygon points="64.00,55.20 66.70,61.08 73.13,61.83 68.37,66.22 69.64,72.57 64.00,69.40 58.36,72.57 59.63,66.22 54.87,61.83 61.30,61.08" fill="#6b4a00"/>
<circle cx="64.00" cy="21.00" r="1.7" fill="#fff"/><circle cx="89.27" cy="29.21" r="1.7" fill="#fff"/><circle cx="104.90" cy="50.71" r="1.7" fill="#fff"/><circle cx="104.90" cy="77.29" r="1.7" fill="#fff"/><circle cx="89.27" cy="98.79" r="1.7" fill="#fff"/><circle cx="64.00" cy="107.00" r="1.7" fill="#fff"/><circle cx="38.73" cy="98.79" r="1.7" fill="#fff"/><circle cx="23.10" cy="77.29" r="1.7" fill="#fff"/><circle cx="23.10" cy="50.71" r="1.7" fill="#fff"/><circle cx="38.73" cy="29.21" r="1.7" fill="#fff"/>
<path d="M64,32.5 C62.5,27 60,24 60,18.5 C60,16 62,14 64,14 C66,14 68,16 68,18.5 C68,24 65.5,27 64,32.5Z" fill="#333"/></svg>
<div style="left:488px;top:562.5px;width:2348px;height:201.5px;border:14px solid #ff2600;border-radius:48px"></div>
<svg style="left:0;top:0" width="2926" height="1656" viewBox="0 0 2926 1656"><path d="M593.60,377.00 L622.66,381.01 L615.14,386.27 Q625.92,395.34 646.41,411.48 A1.60,1.60 0 0 1 644.59,414.12 Q622.23,400.69 609.92,393.85 L607.67,402.74 Z" fill="#ff2600"/></svg>
<svg style="left:0;top:0" width="2926" height="1656" viewBox="0 0 2926 1656"><path d="M727.00,350.80 L760.82,355.96 L752.13,361.97 Q764.47,372.49 787.97,391.21 A1.70,1.70 0 0 1 786.03,393.99 Q760.33,378.44 746.18,370.50 L743.56,380.74 Z" fill="#ff2600"/></svg>
<svg style="left:0;top:0" width="2926" height="1656" viewBox="0 0 2926 1656"><path d="M422.20,896.60 L375.27,921.78 L379.03,909.28 Q351.57,905.63 300.65,901.65 A1.75,1.75 0 0 1 300.55,898.15 Q351.18,891.41 378.40,886.28 L373.97,874.00 Z" fill="#ff2600"/></svg>
<svg style="left:0;top:0" width="2926" height="1656" viewBox="0 0 2926 1656"><path d="M994.90,682.00 L1012.92,673.04 L1011.91,677.89 Q1021.32,679.06 1038.80,680.50 A1.60,1.60 0 0 1 1038.80,683.70 Q1021.31,685.06 1011.89,686.19 L1012.88,691.04 Z" fill="#ff2600"/></svg>
<svg style="left:0;top:0" width="2926" height="1656" viewBox="0 0 2926 1656"><path d="M1630.50,681.00 L1611.80,691.14 L1613.12,684.96 Q1601.17,683.52 1578.97,681.60 A1.60,1.60 0 0 1 1579.03,678.40 Q1601.29,677.35 1613.29,676.36 L1612.21,670.14 Z" fill="#ff2600"/></svg>
<svg style="left:0;top:0" width="2926" height="1656" viewBox="0 0 2926 1656"><path d="M2075.50,684.50 L2057.90,692.79 L2059.16,688.21 Q2050.00,687.02 2032.98,685.50 A1.50,1.50 0 0 1 2033.02,682.50 Q2050.06,681.38 2059.25,680.41 L2058.10,675.79 Z" fill="#ff2600"/></svg>
<svg style="left:0;top:0" width="2926" height="1656" viewBox="0 0 2926 1656"><path d="M2489.00,683.00 L2469.31,691.78 L2470.71,686.91 Q2460.66,685.48 2441.97,683.60 A1.60,1.60 0 0 1 2442.03,680.40 Q2460.79,679.31 2470.90,678.31 L2469.70,673.39 Z" fill="#ff2600"/></svg>
</body></html>
